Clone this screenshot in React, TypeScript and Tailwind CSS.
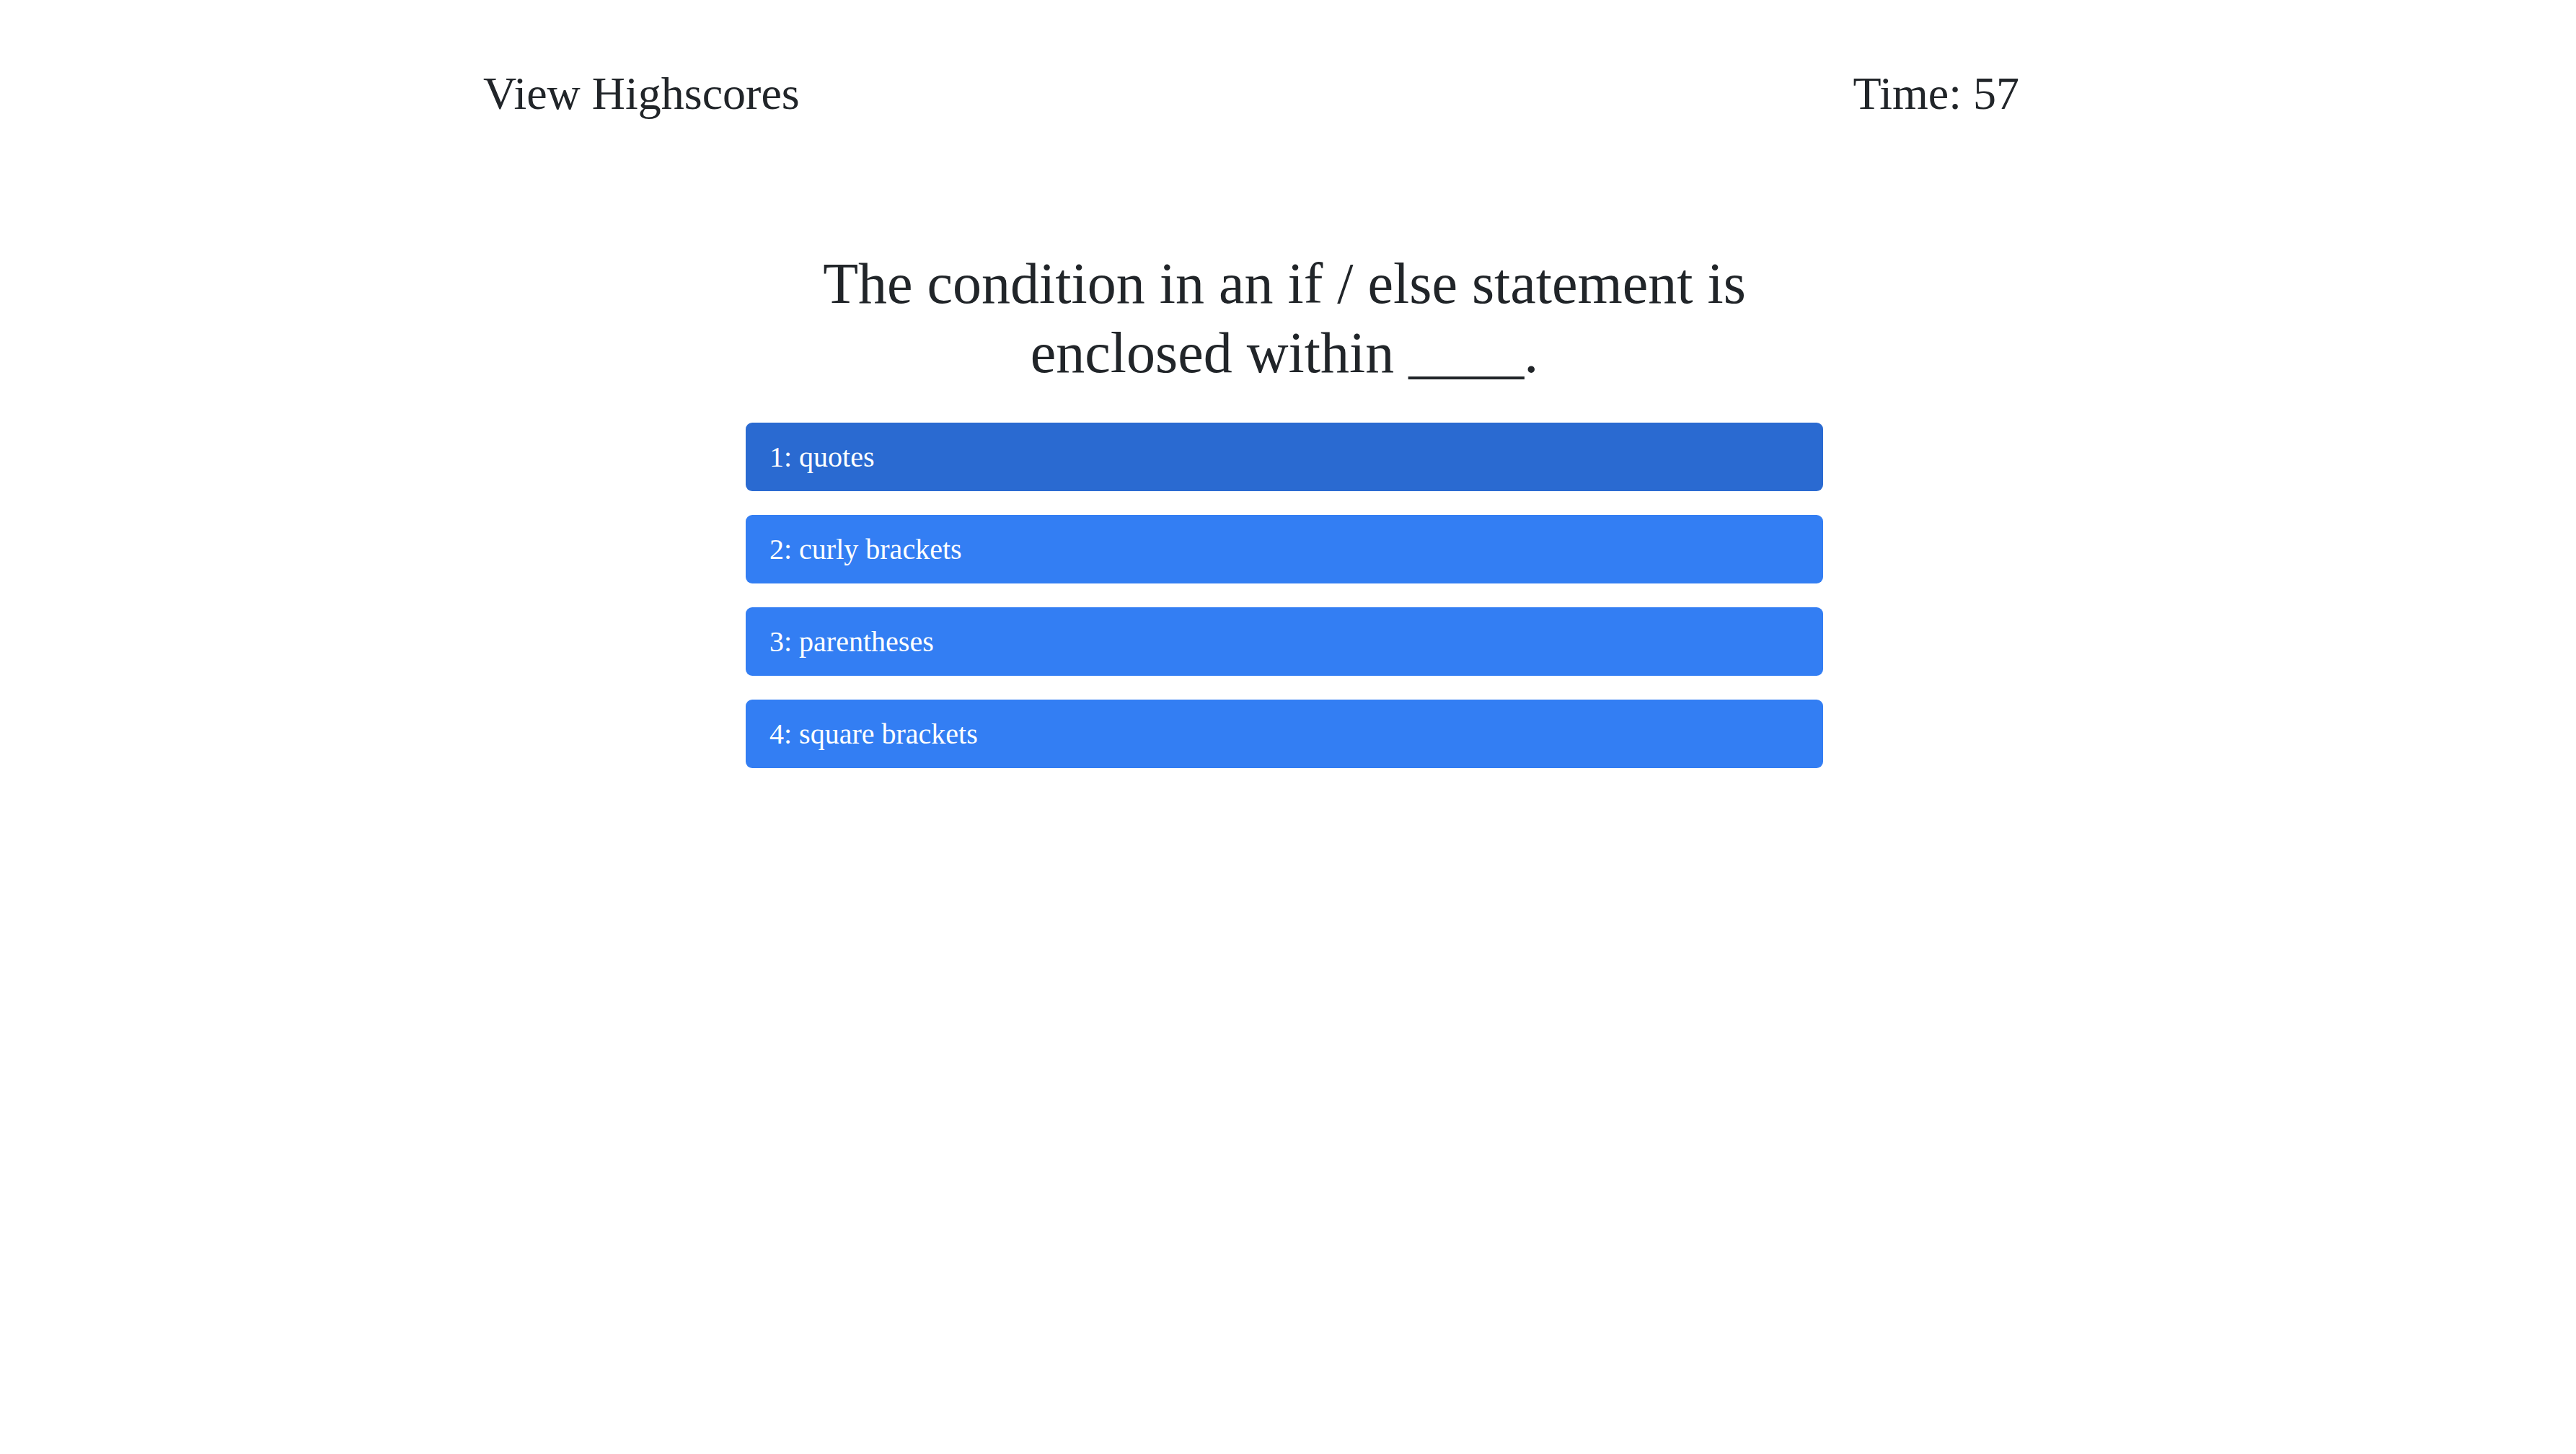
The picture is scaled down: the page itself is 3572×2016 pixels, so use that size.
import React from "react";

const answers = ["1: quotes", "2: curly brackets", "3: parentheses", "4: square brackets"];

export default function App() {
  return (
    <div className="min-h-[2016px] w-full bg-white text-[#212529] [font-family:'Liberation_Serif','Times_New_Roman',serif]">
      <header className="ml-[670px] flex w-[2130px] items-start justify-between pt-[98px] text-[64px] leading-[64px]">
        <span>View Highscores</span>
        <span>Time: 57</span>
      </header>
      <main className="ml-[1034px] mt-[183px] flex w-[1494px] flex-col">
        <h1 className="mx-auto w-[1400px] text-center text-[80px] font-normal leading-[96px]">
          The condition in an if / else statement is enclosed within ____.
        </h1>
        <div className="mt-[49px] flex flex-col gap-[33px]">
          {answers.map((a, i) => (
            <button
              key={a}
              className={
                i === 0
                  ? "flex h-[95px] w-full items-center rounded-[9px] bg-[#2a6ad1] pl-[33px] text-left text-[40px] text-white"
                  : "flex h-[95px] w-full items-center rounded-[9px] bg-[#337ef3] pl-[33px] text-left text-[40px] text-white"
              }
            >
              {a}
            </button>
          ))}
        </div>
      </main>
    </div>
  );
}
